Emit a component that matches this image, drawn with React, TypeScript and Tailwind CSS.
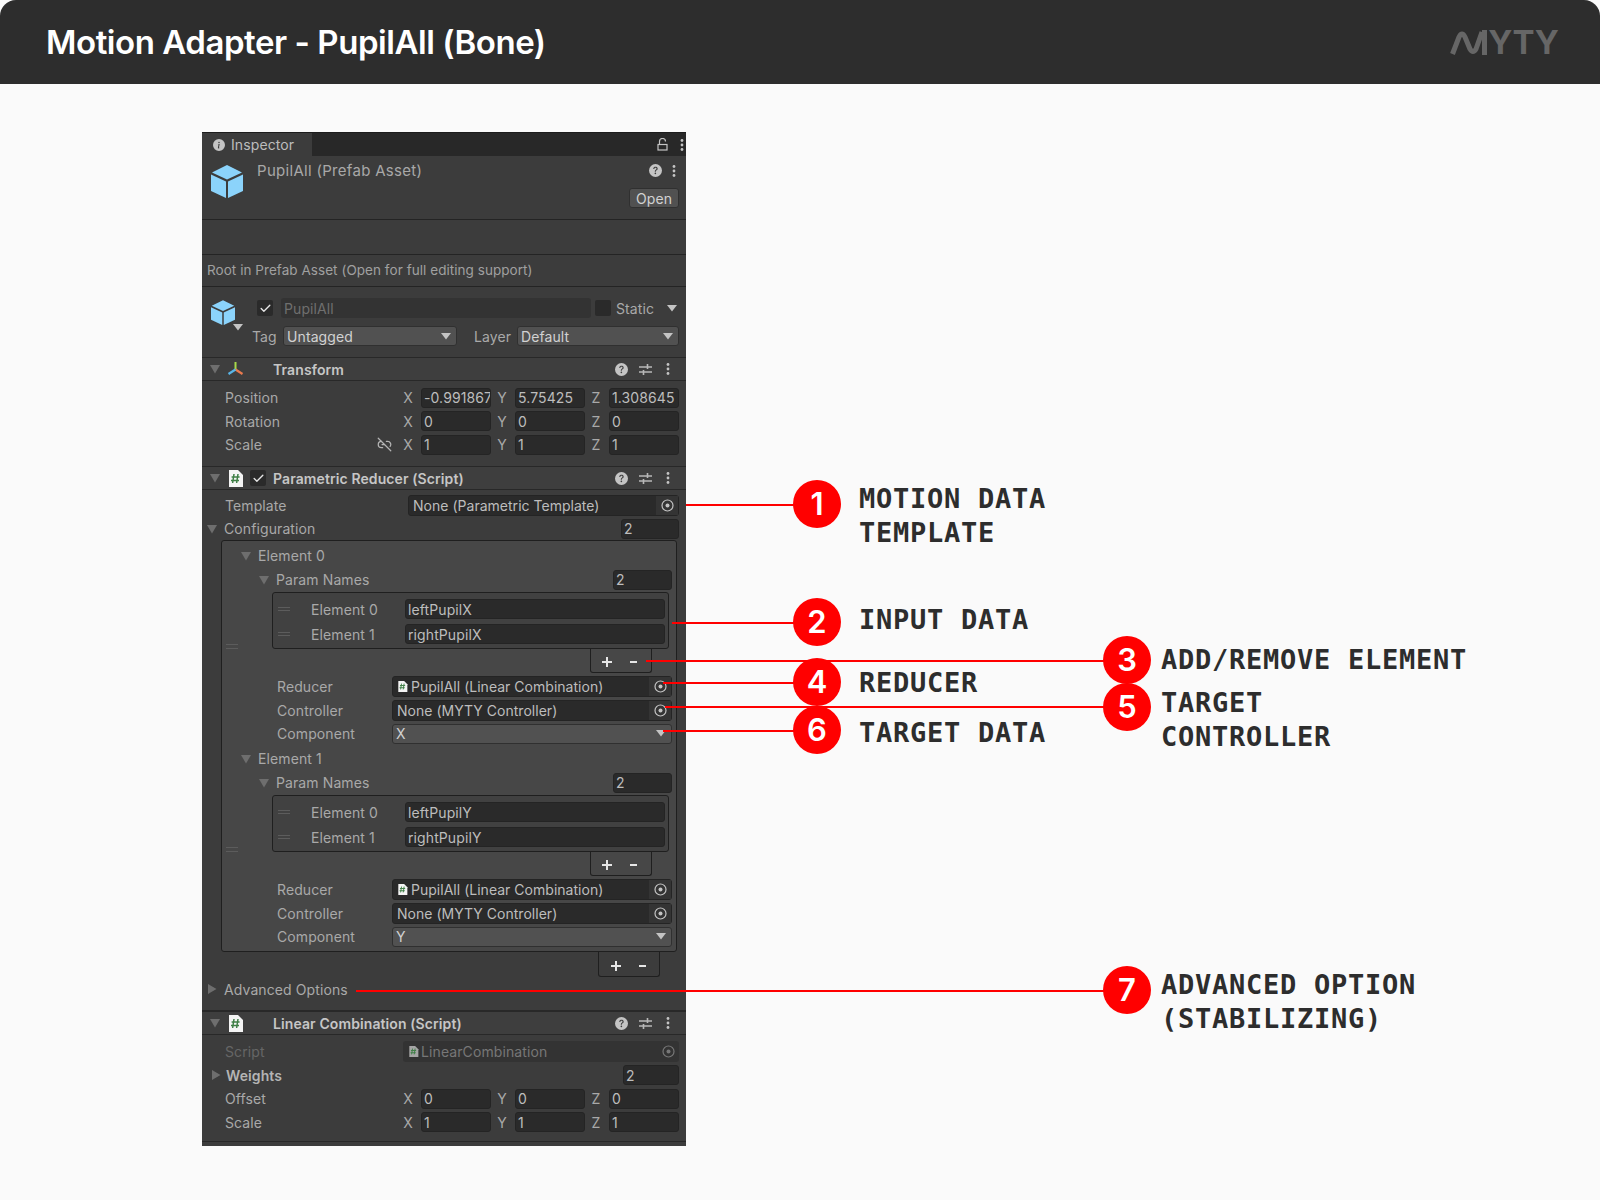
import { ReactNode } from "react";
import { BsInfoCircleFill, BsQuestionCircleFill } from "react-icons/bs";
import { Check, Link2Off } from "lucide-react";

// Shared bits of the Unity inspector
function Fold({ open = true, className = "" }: { open?: boolean; className?: string }) {
  return (
    <svg width="12" height="12" viewBox="0 0 12 12" className={`shrink-0 ${className}`}>
      {open ? <polygon points="1,2 11,2 6,10.5" fill="#6e6e6e" /> : <polygon points="2,1 10.5,6 2,11" fill="#6e6e6e" />}
    </svg>
  );
}

function Arrow({ className = "" }: { className?: string }) {
  return (
    <svg width="10" height="7" viewBox="0 0 10 7" className={`shrink-0 ${className}`}>
      <polygon points="0,0 10,0 5,6.5" fill="#c4c4c4" />
    </svg>
  );
}

function Cube({ size }: { size: number }) {
  return (
    <svg width={size} height={size + 1} viewBox="0 0 32 33" className="shrink-0">
      <polygon points="16,0 31,7.5 16,14.5 1,7.5" fill="#8bd3fb" />
      <polygon points="0,9.5 15,16.5 15,33 0,26" fill="#8bd3fb" />
      <polygon points="32,9.5 17,16.5 17,33 32,26" fill="#8bd3fb" />
    </svg>
  );
}

function Dots({ className = "" }: { className?: string }) {
  return (
    <svg width="4" height="12" viewBox="0 0 4 12" className={`shrink-0 ${className}`}>
      <circle cx="2" cy="1.5" r="1.4" fill="#c4c4c4" />
      <circle cx="2" cy="6" r="1.4" fill="#c4c4c4" />
      <circle cx="2" cy="10.5" r="1.4" fill="#c4c4c4" />
    </svg>
  );
}

function Sliders() {
  return (
    <svg width="13" height="13" viewBox="0 0 13 13" className="shrink-0">
      <path d="M0 4h13M0 9h13" stroke="#b8b8b8" strokeWidth="1.3" />
      <path d="M8.5 1v5M4.5 7v5" stroke="#b8b8b8" strokeWidth="1.6" />
    </svg>
  );
}

function Target({ color = "#c4c4c4" }: { color?: string }) {
  return (
    <svg width="13" height="13" viewBox="0 0 13 13" className="shrink-0">
      <circle cx="6.5" cy="6.5" r="5.5" fill="none" stroke={color} strokeWidth="1.2" />
      <circle cx="6.5" cy="6.5" r="2" fill={color} />
    </svg>
  );
}

function ScriptIcon({ small = false, dim = false }: { small?: boolean; dim?: boolean }) {
  return (
    <svg width={small ? 11 : 15} height={small ? 11 : 17} viewBox="0 0 15 17" className="shrink-0">
      <path d="M1 0h9l5 5v12H1z" fill={dim ? "#a5a5a5" : "#f4f4f4"} />
      <path d="M6 4l-1.4 9M10 4l-1.4 9M3.6 7h8M3 10.4h8" stroke="#3f7f46" strokeWidth="1.5" fill="none" />
    </svg>
  );
}

function TransformIcon() {
  return (
    <svg width="17" height="17" viewBox="0 0 17 17" className="shrink-0">
      <path d="M8.5 8.5V1" stroke="#a6d94a" strokeWidth="2" />
      <path d="M8.5 8.5L15.5 13" stroke="#ea7a4e" strokeWidth="2.2" />
      <path d="M8.5 8.5L1.5 13" stroke="#59b5e8" strokeWidth="2.2" />
    </svg>
  );
}

function Field({ children, className = "" }: { children?: ReactNode; className?: string }) {
  return (
    <div className={`flex h-[20px] items-center overflow-hidden whitespace-nowrap rounded-[3px] border border-[#242424] bg-[#2a2a2a] pl-[2px] text-[#bdbdbd] ${className}`}>
      {children}
    </div>
  );
}

function Popup({ children, className = "" }: { children?: ReactNode; className?: string }) {
  return (
    <div className={`flex h-[20px] items-center justify-between rounded-[3px] border border-[#303030] bg-[#515151] pl-[3px] pr-[5px] text-[#d2d2d2] ${className}`}>
      {children}
      <Arrow />
    </div>
  );
}

function ObjectField({ children, className = "" }: { children: ReactNode; className?: string }) {
  return (
    <div className={`flex h-[21px] items-center justify-between rounded-[3px] border border-[#242424] bg-[#2a2a2a] tracking-[0.02px] text-[#bdbdbd] ${className}`}>
      <div className="flex min-w-0 items-center gap-[3px] pl-[4px]">{children}</div>
      <div className="flex h-full w-[22px] items-center justify-center bg-[#343434]">
        <Target />
      </div>
    </div>
  );
}

function Vec3({ values }: { values: string[] }) {
  const axes = ["X", "Y", "Z"];
  return (
    <div className="ml-auto flex pr-[7px]">
      {values.map((v, i) => (
        <div key={axes[i]} className="flex w-[94px] items-center">
          <span className="w-[24px] pr-[2px] text-center text-[#a9a9a9]">{axes[i]}</span>
          <Field className="w-[70px]">{v}</Field>
        </div>
      ))}
    </div>
  );
}

function Vec3Row({ label, values, extra }: { label: string; values: string[]; extra?: ReactNode }) {
  return (
    <div className="relative flex h-[23.5px] items-center pl-[23px] text-[#a9a9a9]">
      <span>{label}</span>
      {extra}
      <Vec3 values={values} />
    </div>
  );
}

function ComponentHeader({ icon, check, title }: { icon: ReactNode; check?: boolean; title: string }) {
  return (
    <div className="flex h-[24px] items-center border-y border-[#282828] bg-[#3e3e3e] pl-[7px] pr-[16px] font-semibold text-[#c6c6c6]">
      <Fold />
      <div className="ml-[6px] flex w-[17px] justify-center">{icon}</div>
      <div className="ml-[6px] w-[17px]">
        {check && (
          <div className="flex h-[16px] w-[16px] items-center justify-center rounded-[2px] bg-[#2a2a2a]">
            <Check size={13} strokeWidth={2.5} color="#e6e6e6" />
          </div>
        )}
      </div>
      <span className="ml-[6px]">{title}</span>
      <div className="ml-auto flex items-center gap-[11px]">
        <BsQuestionCircleFill size={13} color="#c4c4c4" />
        <Sliders />
        <Dots className="ml-[3px]" />
      </div>
    </div>
  );
}

function ListElementRow({ label, value }: { label: string; value: string }) {
  return (
    <div className="flex h-[25px] items-center text-[#a9a9a9]">
      <div className="ml-[5px] h-[4px] w-[12px] border-y border-[#5c5c5c]" />
      <span className="ml-[21px] w-[94px]">{label}</span>
      <Field className="w-[260px]">{value}</Field>
    </div>
  );
}

function ConfigElement({ index, names, spaced, component }: { index: number; names: string[]; spaced?: boolean; component: string }) {
  return (
    <div className={`relative ${spaced ? "pb-[2px]" : ""}`}>
      <div className="absolute left-[4px] top-[100px] h-[5px] w-[12px] border-y border-[#5c5c5c]" />
      <div className="flex h-[23px] items-center pl-[18px] text-[#a9a9a9]">
        <Fold />
        <span className="ml-[6px]">Element {index}</span>
      </div>
      <div className="flex h-[25px] items-center pl-[36px] pr-[4px] text-[#a9a9a9]">
        <Fold />
        <span className="ml-[6px]">Param Names</span>
        <Field className="ml-auto w-[59px]">2</Field>
      </div>
      <div className="ml-[50px] mr-[7px] flex h-[57px] flex-col justify-center rounded-[3px] border border-[#1f1f1f] bg-[#414141] pt-[2px]">
        {names.map((n, i) => (
          <ListElementRow key={n} label={`Element ${i}`} value={n} />
        ))}
      </div>
      <div className="ml-auto mr-[24px] flex h-[24px] w-[62px] items-center gap-[14px] rounded-b-[3px] border-x border-b border-[#1f1f1f] pl-[10px] pt-[2px]">
        <PlusMinus />
      </div>
      <div className="mt-[2px] flex h-[23px] items-center pl-[55px] pr-[4px] text-[#a9a9a9]">
        <span className="w-[115px]">Reducer</span>
        <ObjectField className="w-[280px]">
          <ScriptIcon small />
          <span className="text-[#bdbdbd]">PupilAll (Linear Combination)</span>
        </ObjectField>
      </div>
      <div className="flex h-[24px] items-center pl-[55px] pr-[4px] text-[#a9a9a9]">
        <span className="w-[115px]">Controller</span>
        <ObjectField className="w-[280px]">None (MYTY Controller)</ObjectField>
      </div>
      <div className="flex h-[23px] items-center pl-[55px] pr-[4px] text-[#a9a9a9]">
        <span className="w-[115px]">Component</span>
        <Popup className="w-[280px]">{component}</Popup>
      </div>
    </div>
  );
}

function PlusMinus() {
  return (
    <>
      <svg width="12" height="12" viewBox="0 0 12 12">
        <path d="M6 1v10M1 6h10" stroke="#e6e6e6" strokeWidth="2" />
      </svg>
      <svg width="12" height="12" viewBox="0 0 12 12">
        <path d="M3 6h7" stroke="#e6e6e6" strokeWidth="2" />
      </svg>
    </>
  );
}

function Inspector() {
  return (
    <div className="h-[1014px] w-[484px] overflow-hidden border-t border-[#1c1c1c] bg-[#3c3c3c] font-['Inter',sans-serif] text-[14px] tracking-[0.1px]">
      {/* tab bar */}
      <div className="flex h-[23px] items-center bg-[#282828] pr-[2px]">
        <div className="flex h-full w-[110px] items-center gap-[6px] bg-[#3c3c3c] pl-[11px] text-[#bdbdbd]">
          <BsInfoCircleFill size={12} color="#c4c4c4" />
          <span>Inspector</span>
        </div>
        <svg width="11" height="13" viewBox="0 0 11 13" className="ml-auto mr-[12px]">
          <path d="M2.5 6V3.5a3 3 0 0 1 6 0" fill="none" stroke="#c4c4c4" strokeWidth="1.2" />
          <rect x="1" y="6.5" width="9" height="5.5" fill="none" stroke="#c4c4c4" strokeWidth="1.2" />
        </svg>
        <Dots />
      </div>

      {/* prefab header */}
      <div className="flex h-[64px] border-b border-[#242424] pl-[9px] pr-[7px]">
        <div className="mt-[9px]">
          <Cube size={32} />
        </div>
        <span className="ml-[14px] mt-[4px] h-[22px] text-[15px] leading-[22px] tracking-[0.3px] text-[#a8a8a8]">PupilAll (Prefab Asset)</span>
        <div className="ml-auto flex flex-col items-end">
          <div className="mr-[3px] mt-[8px] flex h-[13px] items-center gap-[10px]">
            <BsQuestionCircleFill size={13} color="#c4c4c4" />
            <Dots />
          </div>
          <div className="mt-[11px] flex h-[20px] w-[50px] items-center justify-center rounded-[3px] border border-[#303030] bg-[#515151] text-[#d2d2d2]">Open</div>
        </div>
      </div>
      <div className="h-[35px] border-b border-[#242424]" />
      <div className="flex h-[32px] items-center border-b border-[#242424] pl-[5px] text-[13.5px] tracking-[0.05px] text-[#a0a0a0]">Root in Prefab Asset (Open for full editing support)</div>

      {/* game object */}
      <div className="relative h-[70px] pt-[10px]">
        <div className="absolute left-[9px] top-[13px]">
          <Cube size={24} />
        </div>
        <Arrow className="absolute left-[31px] top-[37px]" />
        <div className="flex h-[22px] items-center pl-[55px] pr-[7px]">
          <div className="flex h-[16px] w-[16px] items-center justify-center rounded-[2px] bg-[#2a2a2a]">
            <Check size={13} strokeWidth={2.5} color="#e6e6e6" />
          </div>
          <div className="ml-[8px] flex h-[20px] w-[310px] items-center rounded-[3px] bg-[#333] pl-[3px] text-[#6f6f6f]">PupilAll</div>
          <div className="ml-[4px] h-[16px] w-[16px] rounded-[2px] bg-[#2a2a2a]" />
          <span className="ml-[5px] text-[#a9a9a9]">Static</span>
          <Arrow className="ml-auto mr-[2px]" />
        </div>
        <div className="mt-[7px] flex h-[20px] items-center pl-[50px] pr-[7px] text-[#a9a9a9]">
          <span className="w-[31px]">Tag</span>
          <Popup className="w-[174px]">Untagged</Popup>
          <span className="ml-[17px] w-[43px]">Layer</span>
          <Popup className="w-[162px]">Default</Popup>
        </div>
      </div>

      {/* transform */}
      <ComponentHeader icon={<TransformIcon />} title="Transform" />
      <div className="h-[85px] pt-[5px]">
        <Vec3Row label="Position" values={["-0.991867", "5.75425", "1.308645"]} />
        <Vec3Row label="Rotation" values={["0", "0", "0"]} />
        <Vec3Row
          label="Scale"
          values={["1", "1", "1"]}
          extra={
            <span className="ml-[115px] text-[#b4b4b4]">
              <Link2Off size={15} />
            </span>
          }
        />
      </div>

      {/* parametric reducer */}
      <ComponentHeader icon={<ScriptIcon />} check title="Parametric Reducer (Script)" />
      <div className="h-[519px] border-b border-[#282828]">
        <div className="mt-[2px] flex h-[27px] items-center pl-[23px] pr-[7px] text-[#a9a9a9]">
          <span className="w-[183px]">Template</span>
          <ObjectField className="w-[271px]">None (Parametric Template)</ObjectField>
        </div>
        <div className="flex h-[19px] items-center pl-[4px] pr-[7px] text-[#a9a9a9]">
          <Fold />
          <span className="ml-[6px]">Configuration</span>
          <Field className="ml-auto w-[58px]">2</Field>
        </div>
        <div className="ml-[19px] mr-[9px] mt-[2px] h-[412px] rounded-[3px] border border-[#1f1f1f] bg-[#474747] pt-[3px]">
          <ConfigElement index={0} names={["leftPupilX", "rightPupilX"]} spaced component="X" />
          <ConfigElement index={1} names={["leftPupilY", "rightPupilY"]} component="Y" />
        </div>
        <div className="ml-auto mr-[26px] flex h-[25px] w-[62px] items-center gap-[14px] rounded-b-[3px] border-x border-b border-[#1f1f1f] pl-[11px] pt-[4px]">
          <PlusMinus />
        </div>
        <div className="mt-[1px] flex h-[22px] items-center pl-[4px] text-[#a9a9a9]">
          <Fold open={false} />
          <span className="ml-[6px]">Advanced Options</span>
        </div>
      </div>

      {/* linear combination */}
      <ComponentHeader icon={<ScriptIcon />} title="Linear Combination (Script)" />
      <div className="pt-[5px]">
        <div className="flex h-[23px] items-center pl-[23px] pr-[7px] text-[#666]">
          <span className="w-[178px]">Script</span>
          <div className="flex h-[21px] w-[276px] items-center justify-between rounded-[3px] bg-[#333] pl-[5px] pr-[4px] text-[#777]">
            <div className="flex items-center gap-[2px]">
              <ScriptIcon small dim />
              <span>LinearCombination</span>
            </div>
            <Target color="#777" />
          </div>
        </div>
        <div className="flex h-[24px] items-center pl-[8px] pr-[7px] font-semibold text-[#b4b4b4]">
          <Fold open={false} />
          <span className="ml-[4px]">Weights</span>
          <Field className="ml-auto w-[56px] font-normal">2</Field>
        </div>
        <Vec3Row label="Offset" values={["0", "0", "0"]} />
        <Vec3Row label="Scale" values={["1", "1", "1"]} />
        <div className="mt-[7px] h-[1px] bg-[#282828]" />
      </div>
    </div>
  );
}

// Leader lines and numbered callouts sitting on top of the screenshot
const lines = [
  "left-[686px] top-[504px] w-[108px]",
  "left-[672px] top-[622px] w-[122px]",
  "left-[646px] top-[660px] w-[458px]",
  "left-[663px] top-[682px] w-[131px]",
  "left-[665px] top-[706px] w-[439px]",
  "left-[663px] top-[730px] w-[131px]",
  "left-[356px] top-[990px] w-[748px]",
];

const badges = [
  { n: 1, pos: "left-[793px] top-[480px]" },
  { n: 2, pos: "left-[793px] top-[598px]" },
  { n: 3, pos: "left-[1103px] top-[636px]" },
  { n: 4, pos: "left-[793px] top-[658px]" },
  { n: 5, pos: "left-[1103px] top-[683px]" },
  { n: 6, pos: "left-[793px] top-[706px]" },
  { n: 7, pos: "left-[1103px] top-[966px]" },
];

const labels = [
  { text: "MOTION DATA\nTEMPLATE", pos: "left-[859px] top-[482px]" },
  { text: "INPUT DATA", pos: "left-[859px] top-[603px]" },
  { text: "ADD/REMOVE ELEMENT", pos: "left-[1161px] top-[643px]" },
  { text: "REDUCER", pos: "left-[859px] top-[666px]" },
  { text: "TARGET\nCONTROLLER", pos: "left-[1161px] top-[686px]" },
  { text: "TARGET DATA", pos: "left-[859px] top-[716px]" },
  { text: "ADVANCED OPTION\n(STABILIZING)", pos: "left-[1161px] top-[968px]" },
];

export default function App() {
  return (
    <div className="relative h-[1200px] w-[1600px] overflow-hidden bg-[#fafafa]">
      <header className="flex h-[84px] items-center justify-between rounded-t-2xl bg-[#2d2d2d] pl-[46px] pr-[41px]">
        <h1 className="pt-[2px] font-['Inter',sans-serif] text-[33px] font-semibold tracking-[-0.45px] text-white">Motion Adapter - PupilAll (Bone)</h1>
        <div className="flex items-center">
          <svg width="38" height="25" viewBox="0 0 38 25">
            <path d="M2.5 24L9 7Q12 1 15 7L20 19Q23 24 26 19L32 2" fill="none" stroke="#666" strokeWidth="5" />
            <path d="M34.5 0v25" stroke="#666" strokeWidth="5" />
          </svg>
          <span className="font-['Inter',sans-serif] text-[33px] font-bold leading-none text-[#666]">YTY</span>
        </div>
      </header>

      <div className="pl-[202px] pt-[48px]">
        <Inspector />
      </div>

      {lines.map((pos) => (
        <div key={pos} className={`absolute h-[2px] bg-[#f00] ${pos}`} />
      ))}
      {badges.map((b) => (
        <div key={b.n} className={`absolute flex h-[48px] w-[48px] items-center justify-center rounded-full bg-[#f00] font-['Inter',sans-serif] text-[31px] font-semibold text-white ${b.pos}`}>
          {b.n}
        </div>
      ))}
      {labels.map((l) => (
        <div key={l.text} className={`absolute whitespace-pre font-['DejaVu_Sans_Mono',monospace] text-[27px] font-bold leading-[34px] tracking-[0.75px] text-[#2d2d2d] ${l.pos}`}>
          {l.text}
        </div>
      ))}
    </div>
  );
}
